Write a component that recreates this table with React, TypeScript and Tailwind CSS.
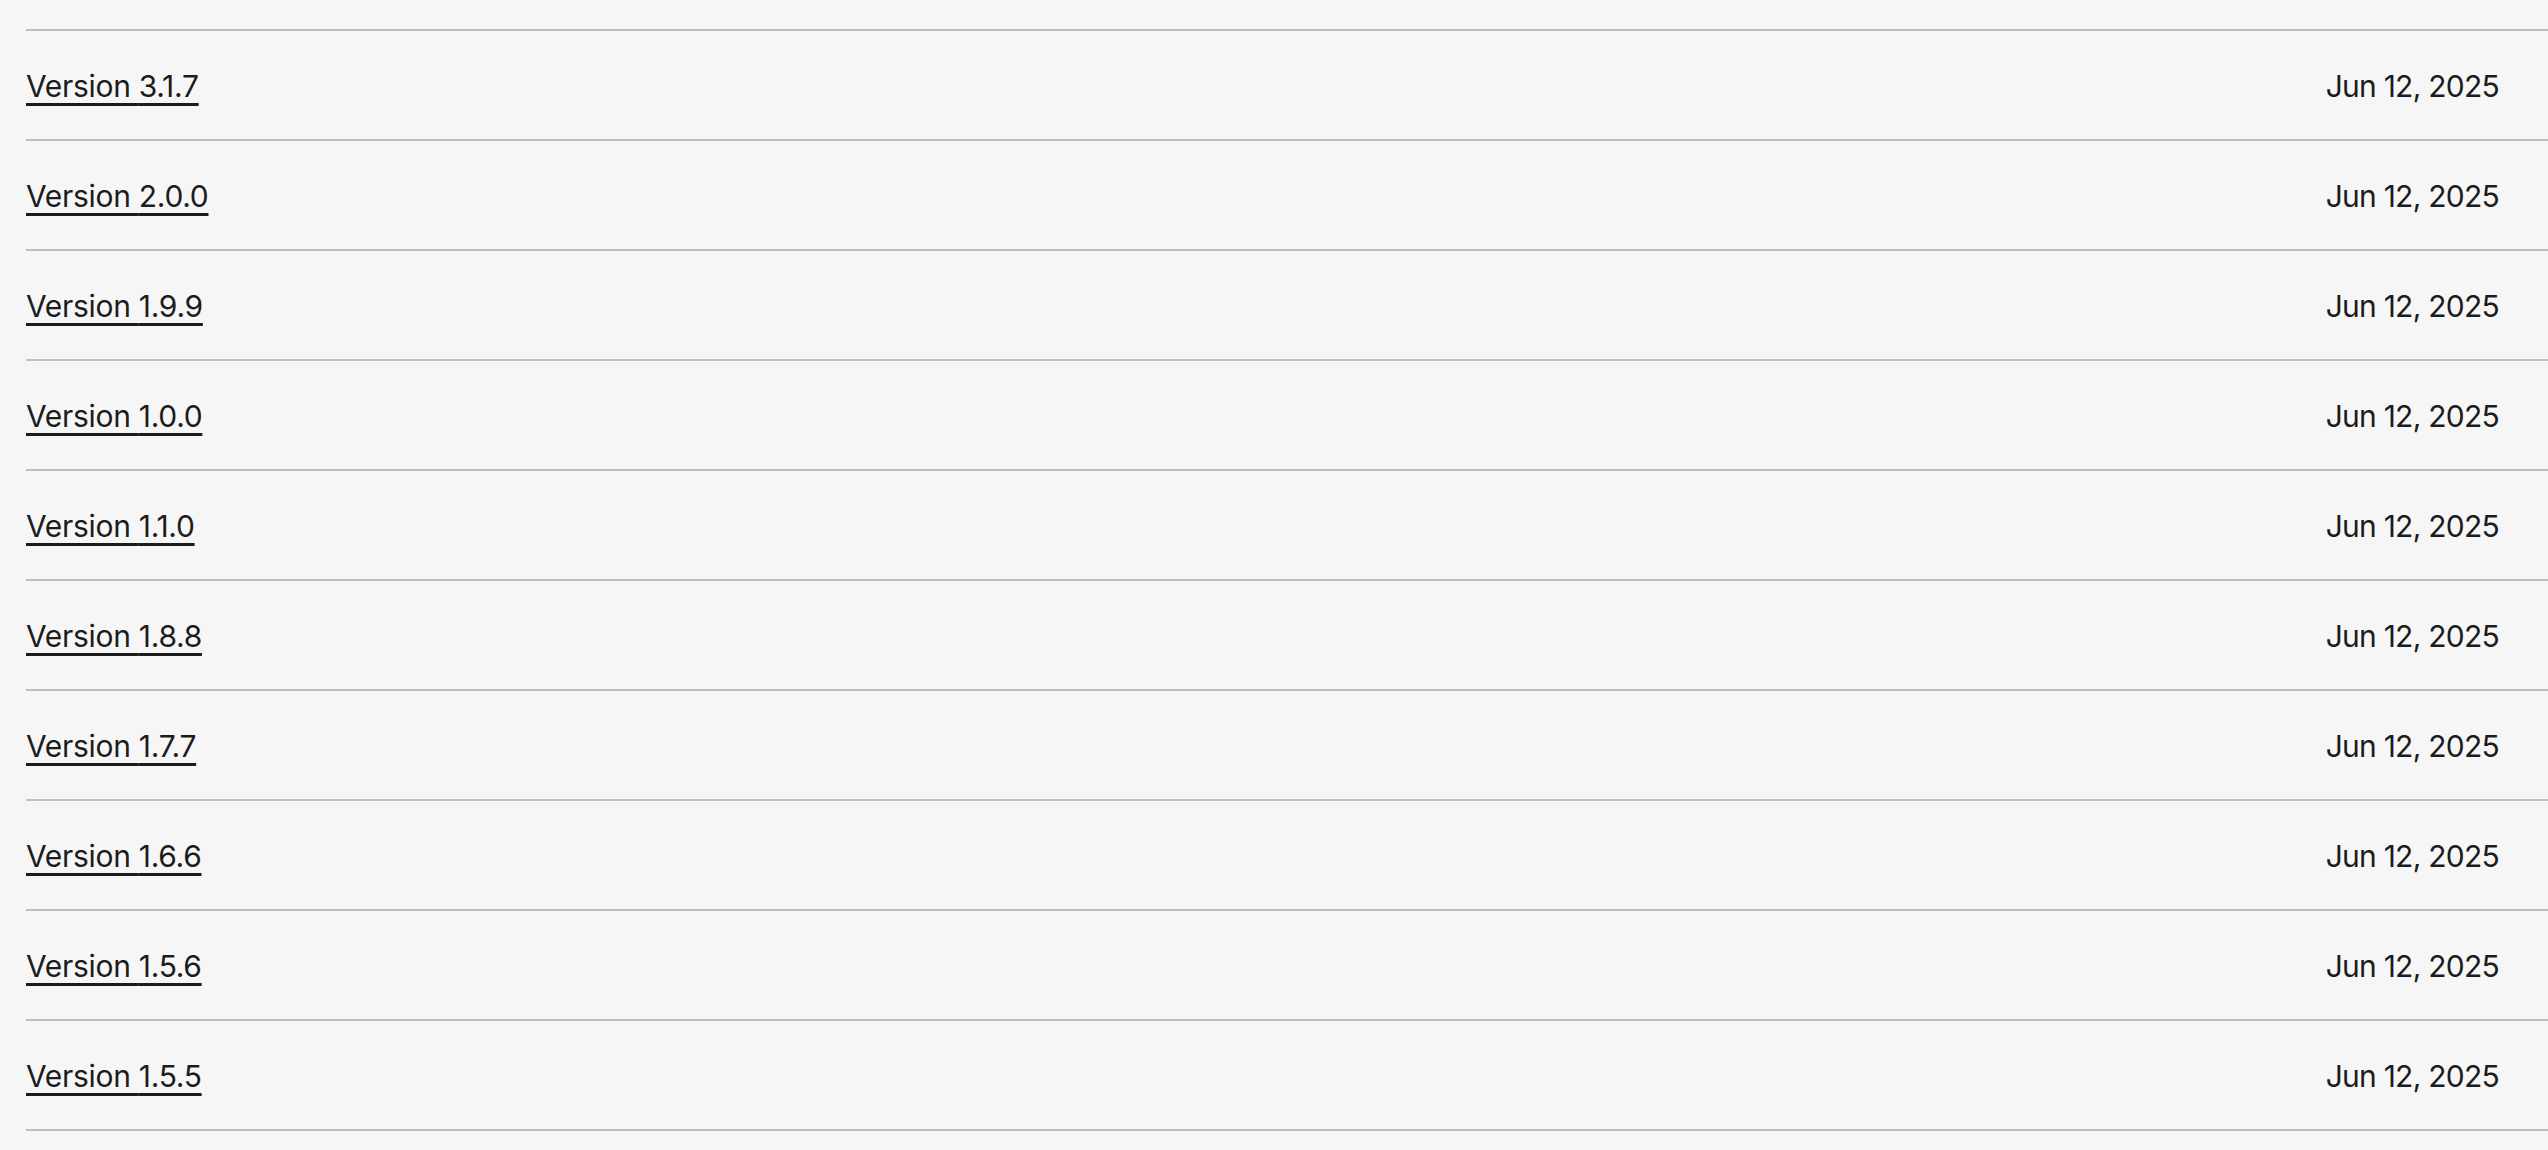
const versions = [
  "3.1.7",
  "2.0.0",
  "1.9.9",
  "1.0.0",
  "1.1.0",
  "1.8.8",
  "1.7.7",
  "1.6.6",
  "1.5.6",
  "1.5.5",
];

const App = () => {
  return (
    <div
      className="min-h-screen bg-[#f6f6f6] pt-[29px] pl-[26px] text-[#1c1c1c]"
      style={{ fontFamily: "Inter, 'Liberation Sans', sans-serif" }}
    >
      <ul className="border-b-2 border-[#c6bcbf]">
        {versions.map((v) => (
          <li
            key={v}
            className="flex h-[110px] items-center justify-between border-t-2 border-[#c6bcbf] pt-[3px] pr-[49px] text-[30px] tracking-[-0.01em]"
          >
            <a
              href="#"
              className="underline decoration-[2.5px] underline-offset-[6px] decoration-[#1c1c1c]"
            >
              Version {v}
            </a>
            <span className="tracking-[-0.025em]">Jun 12, 2025</span>
          </li>
        ))}
      </ul>
    </div>
  );
};

export default App;
